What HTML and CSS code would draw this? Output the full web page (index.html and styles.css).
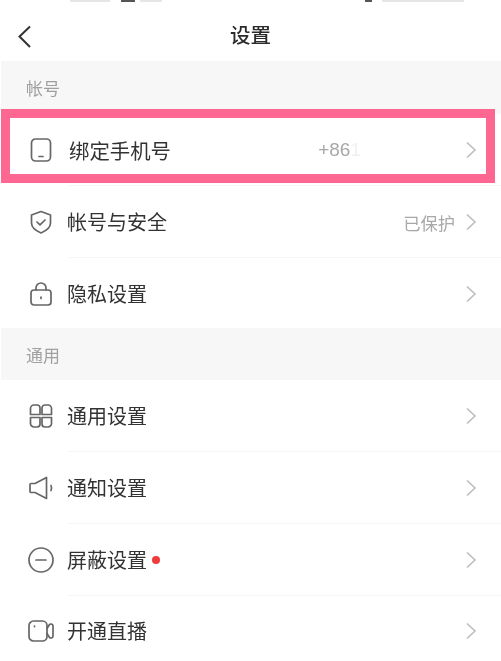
FILE: index.html
```html
<!DOCTYPE html>
<html lang="zh-CN">
<head>
<meta charset="utf-8">
<title>设置</title>
<link rel="stylesheet" href="styles.css">
</head>
<body>
<div class="screen">
  <div class="status"><span class="status-bit s1"></span><span class="status-bit s2"></span><span class="status-bit s3"></span><span class="status-bit s4"></span><span class="status-bit s5"></span></div>
  <header class="topbar">
    <svg class="back" viewBox="0 0 16 26"><path d="M13 2.500 2.500 12.500 13 23"/></svg>
    <h1>设置</h1>
  </header>
  <div class="section section-first">帐号</div>
  <div class="row row-first">
    <svg class="icon" viewBox="0 0 26 26"><rect x="3.500" y="2" width="19" height="22" rx="4"/><path d="M11 19.500h4"/></svg>
    <span class="label label-first">绑定手机号</span>
    <span class="value value-phone">+86<i>1</i></span>
    <svg class="chev" viewBox="0 0 12 18"><path d="M2 1.500 10 9l-8 7.500"/></svg>
  </div>
  <div class="row">
    <svg class="icon" viewBox="0 0 26 26"><path d="M13 2.500 22.500 6v8c0 4.500-4.500 7.800-9.500 10-5-2.200-9.500-5.500-9.500-10V6z"/><path d="m9 13 3 2.800 5-4.800"/></svg>
    <span class="label">帐号与安全</span>
    <span class="value">已保护</span>
    <svg class="chev" viewBox="0 0 12 18"><path d="M2 1.500 10 9l-8 7.500"/></svg>
  </div>
  <div class="row row-last">
    <svg class="icon" viewBox="0 0 26 26"><rect x="3" y="9" width="20" height="15" rx="3"/><path d="M8 9V7a5 5 0 0 1 10 0v2"/><path d="M13 16v1.500"/></svg>
    <span class="label">隐私设置</span>
    <svg class="chev" viewBox="0 0 12 18"><path d="M2 1.500 10 9l-8 7.500"/></svg>
  </div>
  <div class="section">通用</div>
  <div class="row">
    <svg class="icon" viewBox="0 0 26 26"><path d="M6 2h3a3 3 0 0 1 3 3v6.500H2.500V5.500A3.500 3.500 0 0 1 6 2zM17 2h3a3.500 3.500 0 0 1 3.500 3.500v6H14V5a3 3 0 0 1 3-3zM2.500 14.500H12V21a3 3 0 0 1-3 3H6a3.500 3.500 0 0 1-3.500-3.500zM14 14.500h9.500v6A3.500 3.500 0 0 1 20 24h-3a3 3 0 0 1-3-3z"/></svg>
    <span class="label">通用设置</span>
    <svg class="chev" viewBox="0 0 12 18"><path d="M2 1.500 10 9l-8 7.500"/></svg>
  </div>
  <div class="row">
    <svg class="icon" viewBox="0 0 26 26"><path d="M2 9.500c0-.6.400-1 1-1h4L18.500 2.500v21L7 17.500H3c-.6 0-1-.4-1-1z"/><path d="M23 10.500c.7 1.600.7 3.400 0 5"/></svg>
    <span class="label">通知设置</span>
    <svg class="chev" viewBox="0 0 12 18"><path d="M2 1.500 10 9l-8 7.500"/></svg>
  </div>
  <div class="row">
    <svg class="icon" viewBox="0 0 26 26"><circle cx="13" cy="13" r="12"/><path d="M8 13h10"/></svg>
    <span class="label">屏蔽设置</span>
    <span class="dot"></span>
    <svg class="chev" viewBox="0 0 12 18"><path d="M2 1.500 10 9l-8 7.500"/></svg>
  </div>
  <div class="row row-end">
    <svg class="icon" viewBox="0 0 26 26"><rect x="1" y="3" width="18" height="20" rx="4.500"/><path d="M19 10.500 21.500 6.500c1-.8 3.500-.8 3.500 1.500v10c0 2.300-2.500 2.300-3.500 1.500L19 15.500"/><path d="M6.500 8v.6"/></svg>
    <span class="label">开通直播</span>
    <svg class="chev" viewBox="0 0 12 18"><path d="M2 1.500 10 9l-8 7.500"/></svg>
  </div>
  <div class="highlight"></div>
</div>
</body>
</html>
```

FILE: styles.css
```css
* { box-sizing: border-box; }
html, body { margin: 0; padding: 0; background: #fff; }
body { font-family: "Noto Sans CJK SC", "Liberation Sans", sans-serif; color: #333; }
.screen { position: relative; width: 501px; height: 661px; overflow: hidden; background: #fff; filter: blur(0.45px); }
.status { height: 4px; position: relative; }
.status-bit { position: absolute; top: 0; height: 2px; background: #e6e6e6; }
.s1 { left: 70px; width: 40px; }
.s2 { left: 121px; width: 14px; background: #555; }
.s3 { left: 140px; width: 22px; }
.s4 { left: 365px; width: 7px; background: #555; }
.s5 { left: 382px; width: 82px; }
.topbar { display: flex; align-items: center; justify-content: center; height: 57px; position: relative; }
.topbar h1 { margin: 0; font-size: 20.500px; font-weight: 500; line-height: 1; color: #2b2b2b; position: relative; top: 2px; }
.back { position: absolute; left: 17px; top: 20px; width: 16px; height: 26px; fill: none; stroke: #333; stroke-width: 2; }
.section { height: 52px; margin-left: 1px; background: #f7f7f7; color: #a0a0a0; font-size: 17px; display: flex; align-items: center; padding-left: 25px; }
.section-first { height: 53px; padding-bottom: 1px; }
.row { display: flex; align-items: center; height: 72px; margin-left: 1px; padding: 0 24px 0 27px; position: relative; background: #fff; }
.row::after { content: ""; position: absolute; left: 67px; right: 0; bottom: 0; height: 1px; background: #f5f5f5; }
.row-last::after, .row-end::after { display: none; }
.row-first { height: 72px; }
.row-last { height: 70px; padding-top: 2px; }
.row-end { padding-bottom: 2px; }
.icon { width: 26px; height: 26px; flex: none; fill: none; stroke: #666; stroke-width: 1.700; stroke-linecap: round; stroke-linejoin: round; }
.label { margin-left: 13px; font-size: 20px; line-height: 1; color: #333; }
.label-first { margin-left: 15px; font-size: 20.400px; }
.value { margin-left: auto; margin-right: 10px; font-size: 17.300px; color: #a8a8a8; }
.value-phone { margin-right: 104px; font-size: 19px; font-family: "Liberation Sans", sans-serif; }
.value-phone i { font-style: normal; color: #f0f0f0; }
.chev { margin-left: auto; width: 12px; height: 18px; flex: none; fill: none; stroke: #bdbdbd; stroke-width: 1.600; }
.value + .chev { margin-left: 0; }
.dot { width: 8px; height: 8px; margin-left: 5px; border-radius: 50%; background: #ee3b3b; }
.highlight { position: absolute; left: 1px; top: 109px; width: 494px; height: 74px; border: 9px solid #ff6793; }
```
